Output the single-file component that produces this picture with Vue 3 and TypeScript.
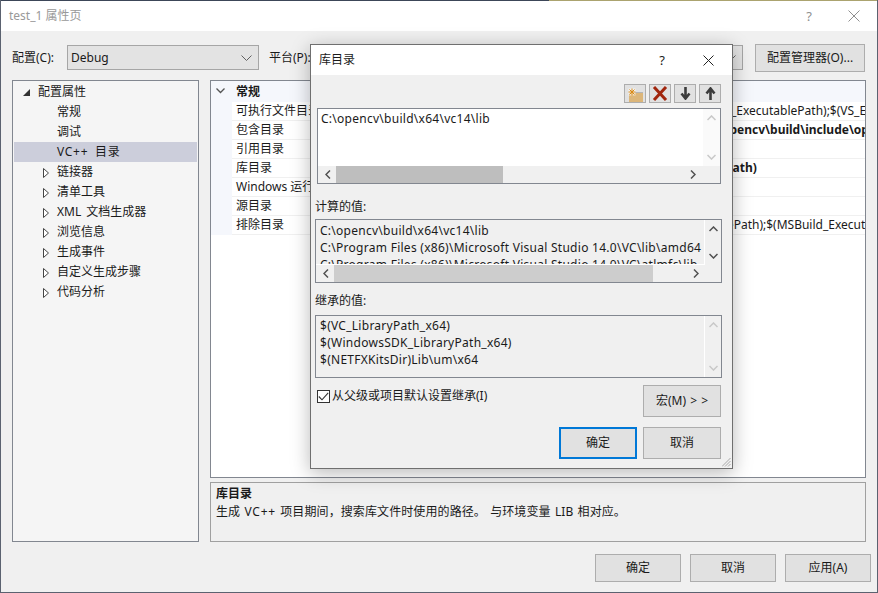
<script setup lang="ts">
const tree = [
  { label: '常规', arrow: false },
  { label: '调试', arrow: false },
  { label: 'VC++ 目录', arrow: false, selected: true },
  { label: '链接器', arrow: true },
  { label: '清单工具', arrow: true },
  { label: 'XML 文档生成器', arrow: true },
  { label: '浏览信息', arrow: true },
  { label: '生成事件', arrow: true },
  { label: '自定义生成步骤', arrow: true },
  { label: '代码分析', arrow: true },
]
const rows = [
  { name: '可执行文件目录', value: '$(VC_ExecutablePath_x64);$(WindowsSDK_ExecutablePath);$(VS_ExecutablePath);$(MSBuild)' },
  { name: '包含目录', value: 'C:\\opencv;C:\\opencv\\build\\include;C:\\opencv\\build\\include\\opencv;C:\\opencv\\build\\include\\opencv2', bold: true },
  { name: '引用目录', value: '' },
  { name: '库目录', value: 'C:\\opencv\\build\\x64\\vc14\\lib;$(LibraryPath)', bold: true },
  { name: 'Windows 运行库目录', value: '' },
  { name: '源目录', value: '' },
  { name: '排除目录', value: '$(VC_IncludePath);$(WindowsSDK_IncludePath);$(MSBuild_ExecutablePath);$(VC_LibraryPath_x64)' },
]
</script>

<template>
  <div class="window">
    <div class="top-edge"></div>
    <div class="titlebar">
      <span class="title">test_1 属性页</span>
      <span class="cap-help">?</span>
      <svg class="cap-close" width="12" height="12" viewBox="0 0 12 12"><path d="M.5.5l11 11M11.500.5l-11 11" stroke="#8f8f8f" fill="none" /></svg>
    </div>

    <div class="content">
      <div class="config-row">
        <label class="cfg-label">配置(C):</label>
        <div class="select cfg-select">
          <span>Debug</span>
          <svg width="11" height="6" viewBox="0 0 11 6"><path d="M.5.5l5 5 5-5" stroke="#606060" fill="none" /></svg>
        </div>
        <label class="plat-label">平台(P):</label>
        <div class="select plat-select">
          <span></span>
          <svg width="11" height="6" viewBox="0 0 11 6"><path d="M.5.5l5 5 5-5" stroke="#606060" fill="none" /></svg>
        </div>
        <button class="btn mgr">配置管理器(O)...</button>
      </div>

      <div class="main">
        <div class="tree">
          <div class="tree-row root">
            <svg class="root-arrow" width="7" height="7" viewBox="0 0 7 7"><path d="M7 0v7H0z" fill="#333" /></svg>
            <span>配置属性</span>
          </div>
          <div v-for="t in tree" :key="t.label" class="tree-row child" :class="{ selected: t.selected }">
            <svg v-if="t.arrow" class="child-arrow" width="6" height="10" viewBox="0 0 6 10"><path d="M.5.5v9l5-4.500z" fill="#fff" stroke="#444" /></svg>
            <span>{{ t.label }}</span>
          </div>
        </div>

        <div class="right">
          <div class="grid">
            <div class="grid-head">
              <svg class="head-chevron" width="9" height="6" viewBox="0 0 9 6"><path d="M.5.500l4 4 4-4" stroke="#555" stroke-width="1.300" fill="none" /></svg>
              <b>常规</b>
            </div>
            <div v-for="r in rows" :key="r.name" class="grid-row">
              <div class="gutter"></div>
              <div class="cell-name">{{ r.name }}</div>
              <div class="cell-value" :class="{ bold: r.bold }">{{ r.value }}</div>
            </div>
          </div>
          <div class="desc">
            <b>库目录</b>
            <div class="desc-text">生成 <span class="plus">VC++</span> 项目期间，搜索库文件时使用的路径。   与环境变量 LIB 相对应。</div>
          </div>
        </div>
      </div>
    </div>

    <div class="footer">
      <button class="btn foot">确定</button>
      <button class="btn foot">取消</button>
      <button class="btn foot">应用(A)</button>
    </div>

    <div class="dialog">
      <div class="dlg-title">
        <span>库目录</span>
        <span class="dlg-help">?</span>
        <svg class="dlg-close" width="11" height="11" viewBox="0 0 11 11"><path d="M.5.5l10 10M10.500.5l-10 10" stroke="#222" fill="none" /></svg>
      </div>
      <div class="dlg-body">
        <div class="toolbar">
          <button class="tool">
            <svg width="16" height="16" viewBox="0 0 16 16">
              <path d="M2 7h14v9H2z" fill="#dcb67a" />
              <path d="M8 6h8v1H8z" fill="#b5b5b5" />
              <path d="M1.500 2.500h7v7h-7z" fill="#fff" opacity=".6" />
              <path d="M5 2.500v7M1.500 6h7M2.500 3.500l5 5M7.500 3.500l-5 5" stroke="#d98a16" fill="none" />
            </svg>
          </button>
          <button class="tool">
            <svg width="16" height="15" viewBox="0 0 16 15"><path d="M2 1l12 13M14 1L2 14" stroke="#a1260d" stroke-width="3" fill="none" /></svg>
          </button>
          <button class="tool">
            <svg width="11" height="13" viewBox="0 0 11 13"><path d="M5.500 0v11M1.500 6.500l4 5 4-5" stroke="#3c3c3c" stroke-width="2.600" fill="none" /></svg>
          </button>
          <button class="tool">
            <svg width="11" height="13" viewBox="0 0 11 13"><path d="M5.500 13V2M1.500 6.500l4-5 4 5" stroke="#3c3c3c" stroke-width="2.600" fill="none" /></svg>
          </button>
        </div>

        <div class="list list-edit">
          <div class="list-main">
            <div class="list-text latin">C:\opencv\build\x64\vc14\lib</div>
            <div class="vbar">
              <svg width="9" height="6" viewBox="0 0 9 6"><path d="M.5 5l4-4 4 4" stroke="#c8c8c8" stroke-width="1.500" fill="none" /></svg>
              <svg width="9" height="6" viewBox="0 0 9 6"><path d="M.5 1l4 4 4-4" stroke="#c8c8c8" stroke-width="1.500" fill="none" /></svg>
            </div>
          </div>
          <div class="hbar">
            <svg width="6" height="9" viewBox="0 0 6 9"><path d="M5 .5l-4 4 4 4" stroke="#505050" stroke-width="1.500" fill="none" /></svg>
            <div class="track"><div class="thumb thumb-edit"></div></div>
            <svg width="6" height="9" viewBox="0 0 6 9"><path d="M1 .5l4 4-4 4" stroke="#505050" stroke-width="1.500" fill="none" /></svg>
          </div>
        </div>

        <div class="sec-label computed">计算的值:</div>
        <div class="list list-computed">
          <div class="list-main">
            <div class="list-text flat latin">
              <div>C:\opencv\build\x64\vc14\lib</div>
              <div>C:\Program Files (x86)\Microsoft Visual Studio 14.0\VC\lib\amd64</div>
              <div>C:\Program Files (x86)\Microsoft Visual Studio 14.0\VC\atlmfc\lib</div>
            </div>
            <div class="vbar flatbar">
              <svg width="9" height="6" viewBox="0 0 9 6"><path d="M.5 5l4-4 4 4" stroke="#505050" stroke-width="1.500" fill="none" /></svg>
              <svg width="9" height="6" viewBox="0 0 9 6"><path d="M.5 1l4 4 4-4" stroke="#505050" stroke-width="1.500" fill="none" /></svg>
            </div>
          </div>
          <div class="hbar">
            <svg width="6" height="9" viewBox="0 0 6 9"><path d="M5 .5l-4 4 4 4" stroke="#505050" stroke-width="1.500" fill="none" /></svg>
            <div class="track"><div class="thumb thumb-computed"></div></div>
            <svg width="6" height="9" viewBox="0 0 6 9"><path d="M1 .5l4 4-4 4" stroke="#505050" stroke-width="1.500" fill="none" /></svg>
          </div>
        </div>

        <div class="sec-label inherited">继承的值:</div>
        <div class="list list-inherited">
          <div class="list-main">
            <div class="list-text flat latin">
              <div>$(VC_LibraryPath_x64)</div>
              <div>$(WindowsSDK_LibraryPath_x64)</div>
              <div>$(NETFXKitsDir)Lib\um\x64</div>
            </div>
            <div class="vbar flatbar">
              <svg width="9" height="6" viewBox="0 0 9 6"><path d="M.5 5l4-4 4 4" stroke="#c8c8c8" stroke-width="1.500" fill="none" /></svg>
              <svg width="9" height="6" viewBox="0 0 9 6"><path d="M.5 1l4 4 4-4" stroke="#c8c8c8" stroke-width="1.500" fill="none" /></svg>
            </div>
          </div>
        </div>

        <div class="check-row">
          <label class="check">
            <span class="box">
              <svg width="11" height="9" viewBox="0 0 11 9"><path d="M.8 4.500l3.200 3.300L10.200.8" stroke="#333" stroke-width="1.100" fill="none" /></svg>
            </span>
            <span>从父级或项目默认设置继承(I)</span>
          </label>
          <button class="btn dlg-btn macro">宏(M) &gt; &gt;</button>
        </div>

        <div class="dlg-actions">
          <button class="btn dlg-btn primary">确定</button>
          <button class="btn dlg-btn">取消</button>
        </div>
      </div>
      <svg class="grip" width="9" height="9" viewBox="0 0 9 9"><path d="M8.500 0L0 8.500M8.500 3L3 8.500M8.500 6L6 8.500" stroke="#a8a8a8" fill="none" /></svg>
    </div>
  </div>
</template>

<style scoped>
.window {
  position: relative;
  width: 878px;
  height: 593px;
  box-sizing: border-box;
  border: 1px solid #5b6270;
  border-top: 0;
  background: #f0f0f0;
  overflow: hidden;
  display: flex;
  flex-direction: column;
  font: 12px/16px "Noto Sans", "Noto Sans CJK SC", sans-serif;
  color: #1a1a1a;
}
.top-edge {
  height: 1px;
  flex: none;
  background: linear-gradient(90deg, #3c4658 0, #3c4658 548px, #aba36f 548px, #aba36f 100%);
}
.titlebar {
  height: 30px;
  flex: none;
  background: #fff;
  display: flex;
  align-items: center;
  padding: 0 17px 0 8px;
}
.title { color: #999; font-size: 12px; }
.cap-help { margin-left: auto; color: #8f8f8f; font-size: 13px; margin-right: 36px; }
.cap-close { display: block; }
.content { padding: 13px 11px 0; flex: none; }
.config-row { display: flex; align-items: center; height: 28px; }
.cfg-label { width: 55px; }
.select {
  height: 25px;
  box-sizing: border-box;
  border: 1px solid #a6a6a6;
  background: #e3e3e3;
  display: flex;
  align-items: center;
  justify-content: space-between;
  padding: 0 6px 0 3px;
  margin-top: -1px;
}
.select svg { display: block; }
.cfg-select { width: 192px; }
.plat-label { margin-left: 10px; width: 50px; }
.plat-select { width: 432px; margin-left: -8px; position: relative; }
.mgr { margin-left: 12px; width: 110px; height: 28px; }
.btn {
  box-sizing: border-box;
  border: 1px solid #adadad;
  background: #e1e1e1;
  font: inherit;
  color: #1a1a1a;
  padding: 0;
}
.main { display: flex; gap: 11px; margin-top: 8px; height: 462px; }
.tree {
  width: 187px;
  box-sizing: border-box;
  border: 1px solid #828790;
  background: #f5f5f5;
  padding: 1px;
  word-spacing: 2px;
}
.tree-row { height: 20px; display: flex; align-items: center; position: relative; }
.root { padding-left: 24px; }
.root-arrow { position: absolute; left: 9px; top: 7px; }
.child { padding-left: 43px; }
.child-arrow { position: absolute; left: 29px; top: 6px; }
.selected { background: #cccedb; letter-spacing: 0.7px; word-spacing: 3px; }
.right { width: 656px; display: flex; flex-direction: column; gap: 4px; }
.grid {
  height: 398px;
  box-sizing: border-box;
  border: 1px solid #828790;
  background: #fff;
  overflow: hidden;
}
.grid-head {
  height: 21px;
  background: #f5f7fc;
  display: flex;
  align-items: center;
  position: relative;
  padding-left: 25px;
}
.head-chevron { position: absolute; left: 5px; top: 7px; }
.grid-row { display: flex; height: 19px; }
.gutter { width: 21px; flex: none; background: #f5f7fc; }
.cell-name {
  width: 265px;
  flex: none;
  padding-left: 4px;
  box-sizing: border-box;
  line-height: 18px;
  white-space: nowrap;
  border-bottom: 1px solid #f0f0f0;
}
.cell-value {
  flex: 1;
  min-width: 0;
  line-height: 18px;
  white-space: nowrap;
  overflow: hidden;
  border-bottom: 1px solid #f0f0f0;
}
.bold { font-weight: 700; }
.desc {
  height: 60px;
  box-sizing: border-box;
  border: 1px solid #a0a0a0;
  padding: 3px 5px;
  background: #f0f0f0;
}
.desc-text { white-space: pre; line-height: 20px; word-spacing: 1px; letter-spacing: 0.1px; }
.plus { letter-spacing: 0.8px; }
.footer { display: flex; justify-content: flex-end; gap: 9px; padding: 12px 6px 0 0; }
.foot { width: 86px; height: 28px; }

.dialog {
  position: absolute;
  left: 309px;
  top: 44px;
  width: 423px;
  height: 425px;
  box-sizing: border-box;
  border: 1px solid #6f6f6f;
  background: #f0f0f0;
  box-shadow: 0 4px 18px rgba(0, 0, 0, 0.28);
}
.dlg-title {
  height: 30px;
  background: #fff;
  display: flex;
  align-items: center;
  padding-left: 8px;
}
.dlg-help { margin-left: auto; font-size: 13px; margin-right: 38px; }
.dlg-close { margin-right: 18px; display: block; }
.dlg-body { padding: 9px 11px 0 4px; }
.toolbar { display: flex; justify-content: flex-end; gap: 3px; height: 19px; }
.tool {
  width: 22px;
  height: 19px;
  box-sizing: border-box;
  border: 1px solid #adadad;
  background: #e1e1e1;
  padding: 0;
  display: flex;
  align-items: center;
  justify-content: center;
}
.list { box-sizing: border-box; border: 1px solid #828790; width: 407px; display: flex; flex-direction: column; overflow: hidden; }
.list-edit { margin-top: 5px; margin-left: 2px; width: 404px; height: 76px; }
.list-main { flex: 1; min-height: 0; display: flex; }
.list-text {
  flex: 1;
  min-width: 0;
  background: #fff;
  padding: 1px 3px;
  white-space: nowrap;
  overflow: hidden;
  line-height: 18px;
}
.latin { letter-spacing: 0.27px; }
.flat { background: #f0f0f0; padding-top: 1px; padding-left: 4px; line-height: 17px; }
.list-computed .flat { background: #f0f0f0; border-bottom: 1px solid #fff; padding-top: 2px; }
.vbar {
  width: 17px;
  flex: none;
  background: #fafafa;
  display: flex;
  flex-direction: column;
  align-items: center;
  justify-content: space-between;
  padding: 6px 0;
  box-sizing: border-box;
}
.flatbar { background: #f0f0f0; border-left: 1px solid #fff; }
.hbar {
  height: 17px;
  flex: none;
  background: #f0f0f0;
  display: flex;
  align-items: center;
  padding: 0 22px 0 7px;
  gap: 5px;
}
.list-edit .hbar { padding-right: 24px; }
.track { flex: 1; height: 100%; }
.thumb { height: 100%; background: #bebebe; }
.thumb-edit { width: 167px; }
.thumb-computed { width: 319px; background: #cdcdcd; }
.sec-label { line-height: 16px; }
.computed { margin-top: 15px; }
.list-computed { height: 64px; margin-top: 4px; }
.inherited { margin-top: 10px; }
.list-inherited { height: 63px; margin-top: 6px; }
.check-row { display: flex; justify-content: space-between; margin-top: 7px; padding-left: 2px; }
.check { display: flex; align-items: flex-start; gap: 2px; }
.box {
  width: 13px;
  height: 13px;
  box-sizing: border-box;
  border: 1px solid #333;
  background: #fff;
  display: flex;
  align-items: center;
  justify-content: center;
  margin-top: 5px;
}
.check > span:last-child { margin-top: 3px; }
.dlg-btn { width: 78px; height: 32px; }
.macro { word-spacing: 1px; }
.dlg-actions { display: flex; justify-content: flex-end; gap: 6px; margin-top: 10px; }
.primary { border: 2px solid #0078d7; }
.grip { position: absolute; right: 1px; bottom: 1px; }
</style>

<style>
html, body { margin: 0; padding: 0; background: #f0f0f0; }
</style>
